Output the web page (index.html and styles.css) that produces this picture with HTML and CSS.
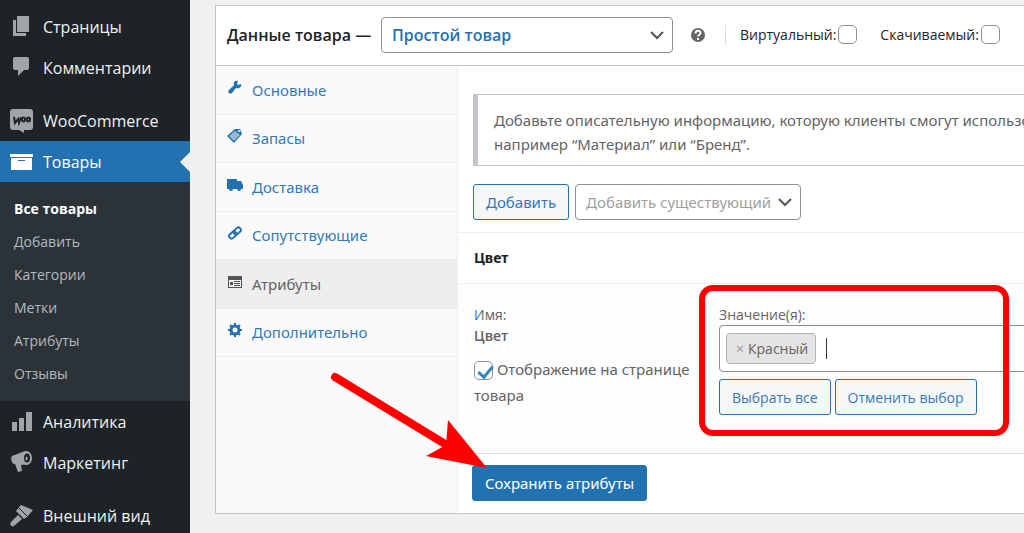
FILE: index.html
```html
<!DOCTYPE html>
<html lang="ru">
<head>
<meta charset="utf-8">
<meta name="viewport" content="width=device-width, initial-scale=1">
<title>Данные товара</title>
<link rel="stylesheet" href="styles.css">
</head>
<body>
<div class="page">
  <nav class="sidebar" aria-label="Меню">
    <ul class="menu">
      <li><a class="menu-link" href="#"><svg class="menu-icon" viewBox="0 0 24 24"><path d="M7 1h12v16H7z"/><path d="M3 5h3v13h10v3H3z"/></svg>Страницы</a></li>
      <li><a class="menu-link" href="#"><svg class="menu-icon" viewBox="0 0 24 24"><path d="M5 1h12a2 2 0 0 1 2 2v9a2 2 0 0 1-2 2h-3l-6 6v-6H5a2 2 0 0 1-2-2V3a2 2 0 0 1 2-2z"/></svg>Комментарии</a></li>
      <li class="spaced"><a class="menu-link" href="#"><svg class="menu-icon" viewBox="0 0 24 24"><path d="M3 0h17a3 3 0 0 1 3 3v15a3 3 0 0 1-3 3h-6v3l-5-3H3a3 3 0 0 1-3-3V3a3 3 0 0 1 3-3z"/><path class="woo" d="M4 8l1 6 3-4 1 4 2-6"/><ellipse class="woo" cx="13.500" cy="10.500" rx="1.500" ry="2"/><ellipse class="woo" cx="18.500" cy="10.500" rx="1.500" ry="2"/></svg>WooCommerce</a></li>
      <li><a class="menu-link current" href="#"><svg class="menu-icon" viewBox="0 0 24 24"><path d="M0 4h23v3H0z"/><path fill-rule="evenodd" d="M1 8h21v12H1zm7 2v1h7v-1z"/></svg>Товары</a>
        <ul class="submenu">
          <li><a class="sub-link selected" href="#">Все товары</a></li>
          <li><a class="sub-link" href="#">Добавить</a></li>
          <li><a class="sub-link" href="#">Категории</a></li>
          <li><a class="sub-link" href="#">Метки</a></li>
          <li><a class="sub-link" href="#">Атрибуты</a></li>
          <li><a class="sub-link" href="#">Отзывы</a></li>
        </ul>
      </li>
      <li><a class="menu-link" href="#"><svg class="menu-icon" viewBox="0 0 24 24"><path d="M2 12h5v9H2zM9 8h5v13H9zM16 2h6v19h-6z"/></svg>Аналитика</a></li>
      <li><a class="menu-link" href="#"><svg class="menu-icon" viewBox="0 0 24 24"><path d="M2 5L15 0l4 13-8 1 1 6-4 1-3-8c-3 1-5-6-3-8z"/><ellipse cx="16.500" cy="7" rx="5.500" ry="7"/><ellipse class="horn" cx="17" cy="7" rx="3" ry="4.500"/><ellipse cx="16.500" cy="7.500" rx="1" ry="2"/></svg>Маркетинг</a></li>
      <li class="spaced"><a class="menu-link" href="#"><svg class="menu-icon" viewBox="0 0 24 24"><path d="M11 1l5 2 7 3-6 7-3 2-8-8z"/><path class="ferrule" d="M9 4l8 8"/><path d="M8 11l4 4-8 7c-2 1-5-1-3-4z"/></svg>Внешний вид</a></li>
    </ul>
  </nav>

  <main class="main">
    <form class="panel">
      <header class="panel-head">
        <h2 class="panel-title"><label for="type">Данные товара —</label></h2>
        <span class="select-box">
          <select class="select type-select" id="type"><option>Простой товар</option></select>
          <svg class="chevron" viewBox="0 0 14 10"><path d="M1 2l6 6 6-6"/></svg>
        </span>
        <svg class="help" viewBox="0 0 16 16" role="img" aria-label="Справка"><circle cx="8" cy="8" r="7"/><path d="M5.500 6.500c0-3.500 5-3.500 5-.5 0 2-2.500 1.500-2.500 3.500M8 11v2"/></svg>
        <div class="flags">
          <label class="flag">Виртуальный: <input class="check" type="checkbox"></label>
          <label class="flag">Скачиваемый: <input class="check" type="checkbox"></label>
        </div>
      </header>

      <div class="panel-body">
        <ul class="tabs">
          <li class="tab"><a class="tab-link" href="#"><svg class="tab-icon" viewBox="0 0 16 16"><path d="M14 4l-3 1-1-1 1-3C8 0 6 2 7 5l-5 5c-2 2 1 5 3 3l4-5c3 1 6-1 5-4z"/></svg>Основные</a></li>
          <li class="tab"><a class="tab-link" href="#"><svg class="tab-icon" viewBox="0 0 16 16"><path d="M0 8l8-7 5 0 2 5-8 9z"/><path class="tag-fill" d="M2 8l6-5 5 4-6 6z"/><circle class="tag-hole" cx="12" cy="3" r="1"/></svg>Запасы</a></li>
          <li class="tab"><a class="tab-link" href="#"><svg class="tab-icon" viewBox="0 0 16 16"><path d="M0 2h10v10H0zM10 4h4l2 4v4h-6z"/><circle cx="4" cy="12" r="2"/><circle cx="12" cy="12" r="2"/></svg>Доставка</a></li>
          <li class="tab"><a class="tab-link" href="#"><svg class="tab-icon" viewBox="0 0 16 16"><g class="line" transform="rotate(-42 8 8)"><rect x="1" y="5.500" width="8" height="5" rx="2.500"/><rect x="7" y="5.500" width="8" height="5" rx="2.500"/></g></svg>Сопутствующие</a></li>
          <li class="tab active"><a class="tab-link" href="#"><svg class="tab-icon" viewBox="0 0 16 16"><path fill-rule="evenodd" d="M1 2h14v12H1zm1 4v7h12V6z"/><path d="M3 8h3v3H3zM7 7h6v1H7zM7 9h6v1H7zM7 11h6v1H7z"/></svg>Атрибуты</a></li>
          <li class="tab"><a class="tab-link" href="#"><svg class="tab-icon" viewBox="0 0 16 16"><circle class="gear" cx="8" cy="8" r="4"/><path class="teeth" d="M8 1v3M8 12v3M1 8h3M12 8h3M3 3l2 2M11 11l2 2M13 3l-2 2M5 11l-2 2"/></svg>Дополнительно</a></li>
        </ul>

        <div class="content">
          <div class="toolbar">
            <p class="notice">Добавьте описательную информацию, которую клиенты смогут использовать,<br>например “Материал” или “Бренд”.</p>
            <div class="actions">
              <button class="button" type="button">Добавить</button>
              <span class="select-box">
                <select class="select exist-select" aria-label="Добавить существующий"><option>Добавить существующий</option></select>
                <svg class="chevron" viewBox="0 0 14 10"><path d="M1 2l6 6 6-6"/></svg>
              </span>
            </div>
          </div>
          <h3 class="attr-title">Цвет</h3>
          <div class="attr">
            <div class="attr-name">
              <span>Имя:</span>
              <strong class="attr-value">Цвет</strong>
              <label class="visible"><input class="check" type="checkbox" checked> Отображение на странице товара</label>
            </div>
            <div class="attr-values">
              <label for="values">Значение(я):</label>
              <div class="tokens">
                <span class="token"><button class="token-x" type="button" aria-label="Удалить">×</button>Красный</span>
                <span class="caret"></span>
                <input class="token-input" id="values" type="text">
              </div>
              <div class="buttons">
                <button class="button" type="button">Выбрать все</button>
                <button class="button" type="button">Отменить выбор</button>
              </div>
            </div>
          </div>
          <footer class="foot"><button class="button primary" type="button">Сохранить атрибуты</button></footer>
        </div>
      </div>
    </form>
  </main>
  <svg class="marks" width="1024" height="533" viewBox="0 0 1024 533" aria-hidden="true">
    <rect x="702" y="288" width="304" height="145" rx="11"/>
    <path class="shaft" d="M335 377l115 70"/>
    <path class="head" d="M487 468l-61-12 20-11 2-25z"/>
  </svg>
</div>
</body>
</html>
```

FILE: styles.css
```css
* { box-sizing: border-box; }
html { overflow: hidden; }
body {
  margin: 0;
  background: #f0f0f1;
  color: #646464;
  font: 15px/24px "Noto Sans", "Open Sans", sans-serif;
}
ul { list-style: none; margin: 0; padding: 0; }
a { text-decoration: none; }
button, input, select { font: inherit; margin: 0; }

.page { position: relative; display: flex; height: 100vh; overflow: hidden; }

.sidebar { flex: 0 0 190px; background: #1d2327; padding-top: 6px; font-family: "Open Sans", sans-serif; }
.menu-link {
  position: relative;
  display: flex;
  align-items: center;
  gap: 9px;
  height: 41px;
  padding-left: 10px;
  color: #f0f0f1;
  font-size: 16px;
}
.spaced { padding-top: 12px; }
.menu-icon { width: 24px; height: 24px; fill: #a0a5aa; }
.woo { fill: none; stroke: #1d2327; stroke-width: 2; }
.menu-icon .horn { fill: #1d2327; }
.ferrule { stroke: #1d2327; stroke-width: 1; }
.current { background: #2271b1; color: #fff; }
.current .menu-icon { fill: #fff; }
.current::after {
  content: "";
  position: absolute;
  right: 0;
  top: 11px;
  border: 10px solid transparent;
  border-left: 0;
  border-right-color: #f0f0f1;
}
.submenu { background: #2c3338; padding: 10px 0 11px; }
.sub-link { display: block; padding-left: 14px; line-height: 33px; font-size: 14px; color: #b4b9be; }
.selected { color: #fff; font-weight: 700; }

.main { flex: 1; min-width: 0; padding: 5px 0 0 25px; }
.panel { width: calc(100% + 80px); background: #fff; border: 1px solid #c3c4c7; }
.panel-head {
  display: flex;
  align-items: center;
  height: 60px;
  padding: 0 11px 2px;
  border-bottom: 1px solid #c3c4c7;
  color: #1d2327;
  font-family: "Open Sans", sans-serif;
}
.panel-title { flex: none; width: 142px; margin: 0 12px 0 0; font-size: 16px; line-height: 24px; font-weight: 600; white-space: nowrap; }

.select-box { position: relative; display: inline-flex; }
.select {
  appearance: none;
  height: 36px;
  padding: 0 28px 0 10px;
  border: 1px solid #8c8f94;
  border-radius: 4px;
  background: #fff;
}
.type-select { width: 292px; color: #2271b1; font-size: 16px; font-weight: 600; }
.exist-select { width: 226px; color: #a0a0a0; }
.chevron { position: absolute; right: 9px; top: 13px; width: 14px; height: 10px; fill: none; stroke: #50575e; stroke-width: 2; pointer-events: none; }
.help { width: 16px; height: 16px; margin: 0 19px 0 17px; fill: #666; }
.help path { fill: none; stroke: #fff; stroke-width: 2; }
.flags { display: flex; align-items: center; gap: 23px; height: 20px; padding-left: 14px; border-left: 1px solid #dcdcde; font-size: 14px; white-space: nowrap; }
.flag { display: flex; align-items: center; gap: 2px; }
.check {
  appearance: none;
  flex: none;
  width: 19px;
  height: 19px;
  border: 1px solid #8c8f94;
  border-radius: 5px;
  background: #fff;
}
.check:checked::before {
  content: "";
  display: block;
  width: 6px;
  height: 12px;
  margin: 1px 0 0 6px;
  border: solid #3582c4;
  border-width: 0 3px 3px 0;
  transform: rotate(40deg);
}

.panel-body { display: flex; }
.tabs { flex: 0 0 242px; display: grid; grid-template-rows: repeat(6, 1fr) 156px; background: #fafafa; border-right: 1px solid #eee; }
.tab { border-bottom: 1px solid #eee; }
.tab-link { display: flex; align-items: center; gap: 9px; height: 100%; padding-left: 11px; color: #3479b7; }
.tab-icon { width: 16px; height: 16px; margin-bottom: 4px; fill: #2271b1; }
.tab-icon .tag-fill { fill: #9bb8d3; }
.tag-hole { fill: #fff; }
.line, .gear, .teeth { fill: none; stroke: #2271b1; stroke-width: 2; }
.gear { stroke-width: 3; }
.active { background: #eee; }
.active .tab-link { color: #646464; }
.active .tab-icon { fill: #555; }

.content { flex: 1; min-width: 0; }
.toolbar { padding: 28px 15px 12px; border-bottom: 1px solid #eee; }
.notice { margin: 0 0 18px; padding: 13px 16px 9px; border: 1px solid #c3c4c7; border-left-width: 5px; white-space: nowrap; }
.actions { display: flex; gap: 6px; }
.button {
  height: 36px;
  padding: 0 12px;
  border: 1px solid #2271b1;
  border-radius: 3px;
  background: #f6f7f7;
  color: #3479b7;
  white-space: nowrap;
}
.primary { background: #2271b1; color: #fff; }
.attr-title { margin: 0; padding: 0 16px; line-height: 50px; border-bottom: 1px solid #eee; color: #1d2327; font-size: 14px; font-weight: 700; }
.attr { display: flex; gap: 25px; min-height: 169px; padding: 20px 0 20px 16px; background: #fdfdfd; font-family: "Open Sans", sans-serif; font-size: 14px; line-height: 21px; }
.attr-name { flex: 0 0 220px; display: flex; flex-direction: column; }
.attr-value { font-weight: 600; }
.visible { margin-top: 10px; font-family: "Noto Sans", sans-serif; font-size: 15px; line-height: 26px; }
.visible .check { vertical-align: middle; }
.attr-values { flex: 1; display: flex; flex-direction: column; }
.tokens { display: flex; align-items: center; height: 47px; padding: 0 6px; border: 1px solid #8c8f94; border-radius: 4px; background: #fff; }
.token { display: flex; align-items: center; height: 31px; padding: 0 7px; border: 1px solid #b4b4b4; border-radius: 4px; background: #e4e4e4; }
.token-x { padding: 0 4px 0 2px; border: 0; background: none; color: #999; }
.caret { width: 1px; height: 21px; margin-left: 10px; background: #333; }
.token-input { flex: 1; min-width: 0; border: 0; outline: 0; background: none; }
.buttons { display: flex; gap: 4px; margin-top: 7px; }
.foot { padding: 11px 14px 12px; border-top: 1px solid #dcdcde; }

.marks { position: absolute; left: 0; top: 0; fill: none; stroke: #f00; stroke-width: 6; pointer-events: none; }
.shaft { stroke-width: 8; stroke-linecap: round; }
.head { fill: #f00; stroke: none; }
```
